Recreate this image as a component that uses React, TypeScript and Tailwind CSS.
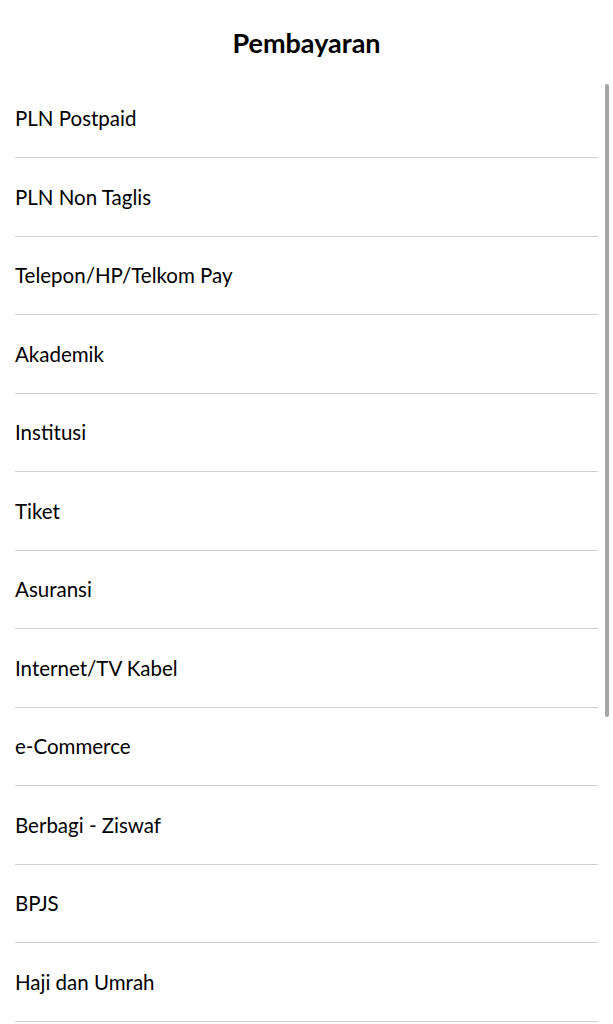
import React from 'react';

const items = [
  'PLN Postpaid',
  'PLN Non Taglis',
  'Telepon/HP/Telkom Pay',
  'Akademik',
  'Institusi',
  'Tiket',
  'Asuransi',
  'Internet/TV Kabel',
  'e-Commerce',
  'Berbagi - Ziswaf',
  'BPJS',
  'Haji dan Umrah',
];

export default function App() {
  return (
    <div className="relative h-[1024px] w-[613px] overflow-hidden bg-white font-['Lato','Liberation_Sans',sans-serif] text-black">
      <div className="flex h-[79.5px] items-start justify-center pt-[26px]">
        <h1 className="text-[27px] font-bold leading-[34px]">Pembayaran</h1>
      </div>

      <ul className="flex flex-col pl-[15px] pr-[15px]">
        {items.map((item) => (
          <li
            key={item}
            className="flex h-[78.5px] shrink-0 items-center border-b-[1.5px] border-[#cfcfcf] text-[20.5px] leading-none"
          >
            {item}
          </li>
        ))}
      </ul>

      {/* scroll thumb */}
      <div className="absolute left-[605px] top-[84px] h-[633px] w-[4px] rounded-full bg-[#a5a5a5]" />
    </div>
  );
}
